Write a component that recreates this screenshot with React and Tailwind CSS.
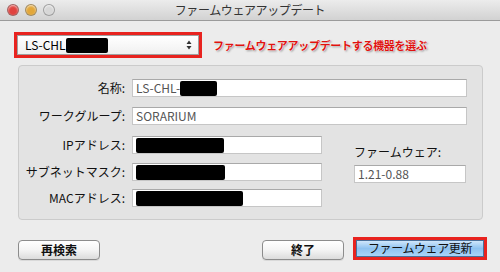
import React from 'react';

const font = "font-['Lucida_Grande','Noto_Sans_CJK_JP',sans-serif]";

function Light({ color }) {
  return (
    <span
      className={`block w-[12px] h-[12px] rounded-full border border-[#7a7a7a]/60 shadow-[inset_0_1px_2px_rgba(255,255,255,0.7)] ${color}`}
    />
  );
}

function Field({ w, children }) {
  return (
    <div
      className={`${w} h-[18px] bg-white border border-[#c6c6c6] border-t-[#a9a9a9] flex items-center pl-[3px] text-[12px] text-[#555]`}
    >
      {children}
    </div>
  );
}

function Redacted({ w }) {
  return <span className={`${w} h-[15px] bg-black rounded-[2px] inline-block`} />;
}

function Row({ label, children, mt }) {
  return (
    <div className={`flex items-center ${mt}`}>
      <div className="w-[113px] pr-[7px] text-right text-[12px] text-[#111]">{label}</div>
      {children}
    </div>
  );
}

function Button({ children, w }) {
  return (
    <button
      className={`${w} h-[20px] rounded-[4px] border border-[#8c8c8c] bg-gradient-to-b from-white via-[#f4f4f4] to-[#dcdcdc] text-[12px] text-[#111] font-semibold shadow-[0_1px_0_rgba(0,0,0,0.08)]`}
    >
      {children}
    </button>
  );
}

export default function App() {
  return (
    <div className={`w-[500px] h-[272px] bg-[#ececec] flex flex-col overflow-hidden ${font}`}>
      {/* title bar */}
      <div className="h-[21px] shrink-0 grid grid-cols-[1fr_auto_1fr] items-center bg-gradient-to-b from-[#ececec] to-[#d2d2d2] border-b border-[#9b9b9b]">
        <div className="flex items-center gap-[6px] pl-[7px]">
          <Light color="bg-[#e0433f]" />
          <Light color="bg-[#e2a73a]" />
          <Light color="bg-[#d7d7d7]" />
        </div>
        <div className="text-[12px] text-[#333] tracking-[-0.4px]">ファームウェアアップデート</div>
        <div />
      </div>

      {/* device select */}
      <div className="flex items-center mt-[11px] ml-[14px]">
        <div className="w-[188px] h-[26px] border-[3px] border-[#e8231f] flex">
          <div className="flex-1 bg-gradient-to-b from-white to-[#f0f0f0] border border-[#a0a0a0] flex items-center pl-[7px] pr-[6px] text-[12px] text-black">
            <span>LS-CHL</span>
            <Redacted w="w-[42px] h-[11px]" />
            <svg className="ml-auto" width="6" height="10" viewBox="0 0 6 10">
              <path d="M3 0.5 L5.5 4 H0.5 Z M3 9.5 L5.5 6 H0.5 Z" fill="#333" />
            </svg>
          </div>
        </div>
        <div className="ml-[11px] text-[11px] font-bold text-[#e0120f] tracking-[-0.3px] [text-shadow:0_0_1px_#fff,0_0_2px_#fff,1px_1px_2px_rgba(0,0,0,0.45)]">
          ファームウェアアップデートする機器を選ぶ
        </div>
      </div>

      {/* info group */}
      <div className="mt-[7px] ml-[18px] w-[465px] h-[155px] bg-[#e3e3e3] border border-[#cbcbcb] rounded-[4px] pt-[13px]">
        <Row label="名称:">
          <Field w="w-[335px]">
            LS-CHL-<Redacted w="w-[37px] h-[11px]" />
          </Field>
        </Row>
        <Row label="ワークグループ:" mt="mt-[10px]">
          <Field w="w-[335px]">SORARIUM</Field>
        </Row>
        <div className="flex">
          <div className="flex flex-col">
            <Row label="IPアドレス:" mt="mt-[11px]">
              <Field w="w-[190px]">
                <Redacted w="w-[88px]" />
              </Field>
            </Row>
            <Row label="サブネットマスク:" mt="mt-[9px]">
              <Field w="w-[190px]">
                <Redacted w="w-[89px]" />
              </Field>
            </Row>
            <Row label="MACアドレス:" mt="mt-[8px]">
              <Field w="w-[190px]">
                <Redacted w="w-[107px]" />
              </Field>
            </Row>
          </div>
          <div className="ml-[32px] mt-[20px] flex flex-col">
            <div className="text-[12px] text-[#111] leading-[14px]">ファームウェア:</div>
            <div className="mt-[6px]">
              <Field w="w-[112px]">1.21-0.88</Field>
            </div>
          </div>
        </div>
      </div>

      {/* buttons */}
      <div className="flex items-center mt-[16px]">
        <div className="ml-[18px]">
          <Button w="w-[82px]">再検索</Button>
        </div>
        <div className="ml-auto">
          <Button w="w-[82px]">終了</Button>
        </div>
        <div className="ml-[9px] mr-[13px] border-[3px] border-[#e8231f]">
          <button className="w-[128px] h-[17px] flex items-center justify-center bg-gradient-to-b from-[#cfe6fb] via-[#8ec2f0] to-[#a8d4f8] border border-[#4a6f99] text-[12px] text-[#111] tracking-[-0.4px]">
            ファームウェア更新
          </button>
        </div>
      </div>
    </div>
  );
}
